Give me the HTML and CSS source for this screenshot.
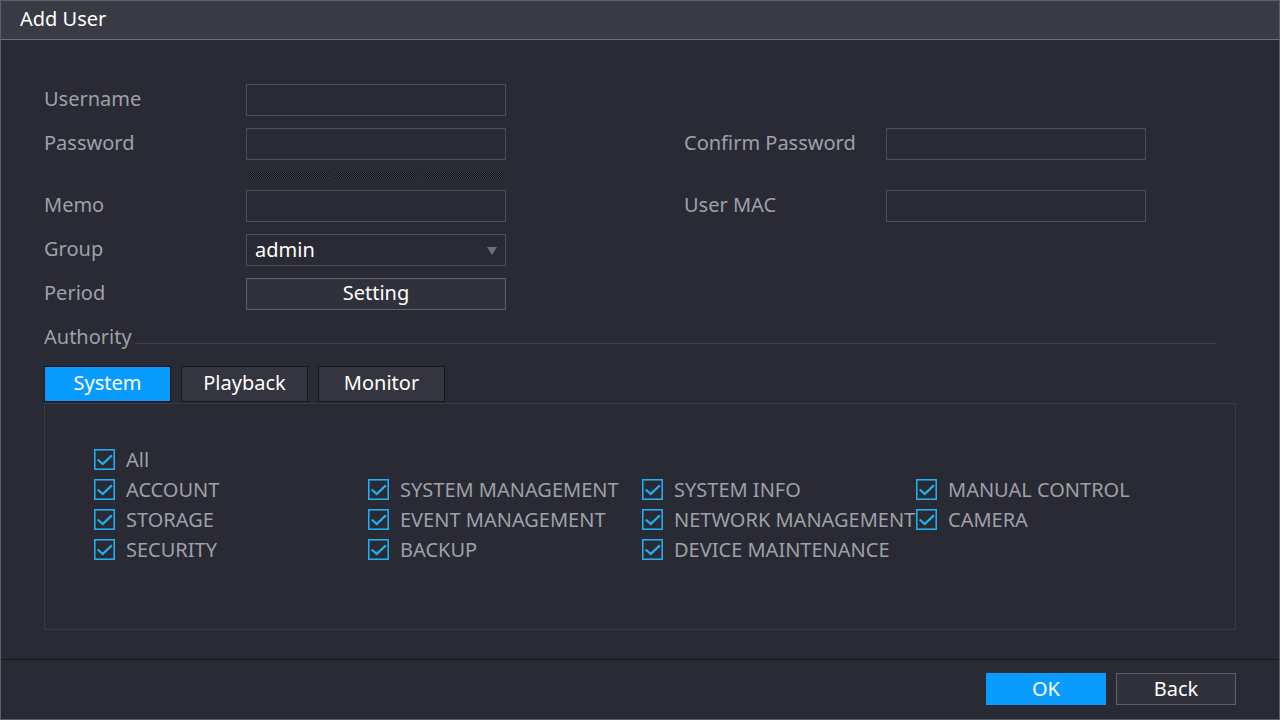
FILE: index.html
```html
<!DOCTYPE html>
<html>
<head>
<meta charset="utf-8">
<link rel="stylesheet" href="styles.css">
</head>
<body>
<div class="window">
  <div class="titlebar">Add User</div>
  <div class="content">
    <div class="form">
      <div class="label">Username</div>
      <div class="input"></div>
      <div class="spacer"></div>
      <div class="spacer"></div>
      <div class="spacer"></div>

      <div class="label">Password</div>
      <div class="input"></div>
      <div class="spacer"></div>
      <div class="label">Confirm Password</div>
      <div class="input"></div>

      <div class="spacer"></div>
      <div class="strength"><span></span><span></span><span></span></div>
      <div class="spacer"></div>
      <div class="spacer"></div>
      <div class="spacer"></div>

      <div class="label">Memo</div>
      <div class="input"></div>
      <div class="spacer"></div>
      <div class="label">User MAC</div>
      <div class="input"></div>

      <div class="label">Group</div>
      <div class="input select"><span class="value">admin</span><span class="arrow"></span></div>
      <div class="spacer"></div>
      <div class="spacer"></div>
      <div class="spacer"></div>

      <div class="label">Period</div>
      <div class="button-field">Setting</div>
      <div class="spacer"></div>
      <div class="spacer"></div>
      <div class="spacer"></div>
    </div>

    <div class="authority">
      <span class="auth-label">Authority</span>
      <span class="auth-line"></span>
    </div>

    <div class="tabs">
      <div class="tab active">System</div>
      <div class="tab">Playback</div>
      <div class="tab">Monitor</div>
    </div>

    <div class="panel">
      <div class="checks">
        <div class="check"><svg class="box" viewBox="0 0 20 20"><rect x="0.75" y="0.75" width="18.5" height="18.5"/><path d="M3.5 10 L8.3 14.3 L17 6"/></svg>All</div>
        <div class="empty"></div><div class="empty"></div><div class="empty"></div>

        <div class="check"><svg class="box" viewBox="0 0 20 20"><rect x="0.75" y="0.75" width="18.5" height="18.5"/><path d="M3.5 10 L8.3 14.3 L17 6"/></svg>ACCOUNT</div>
        <div class="check"><svg class="box" viewBox="0 0 20 20"><rect x="0.75" y="0.75" width="18.5" height="18.5"/><path d="M3.5 10 L8.3 14.3 L17 6"/></svg>SYSTEM MANAGEMENT</div>
        <div class="check"><svg class="box" viewBox="0 0 20 20"><rect x="0.75" y="0.75" width="18.5" height="18.5"/><path d="M3.5 10 L8.3 14.3 L17 6"/></svg>SYSTEM INFO</div>
        <div class="check"><svg class="box" viewBox="0 0 20 20"><rect x="0.75" y="0.75" width="18.5" height="18.5"/><path d="M3.5 10 L8.3 14.3 L17 6"/></svg>MANUAL CONTROL</div>

        <div class="check"><svg class="box" viewBox="0 0 20 20"><rect x="0.75" y="0.75" width="18.5" height="18.5"/><path d="M3.5 10 L8.3 14.3 L17 6"/></svg>STORAGE</div>
        <div class="check"><svg class="box" viewBox="0 0 20 20"><rect x="0.75" y="0.75" width="18.5" height="18.5"/><path d="M3.5 10 L8.3 14.3 L17 6"/></svg>EVENT MANAGEMENT</div>
        <div class="check"><svg class="box" viewBox="0 0 20 20"><rect x="0.75" y="0.75" width="18.5" height="18.5"/><path d="M3.5 10 L8.3 14.3 L17 6"/></svg>NETWORK MANAGEMENT</div>
        <div class="check"><svg class="box" viewBox="0 0 20 20"><rect x="0.75" y="0.75" width="18.5" height="18.5"/><path d="M3.5 10 L8.3 14.3 L17 6"/></svg>CAMERA</div>

        <div class="check"><svg class="box" viewBox="0 0 20 20"><rect x="0.75" y="0.75" width="18.5" height="18.5"/><path d="M3.5 10 L8.3 14.3 L17 6"/></svg>SECURITY</div>
        <div class="check"><svg class="box" viewBox="0 0 20 20"><rect x="0.75" y="0.75" width="18.5" height="18.5"/><path d="M3.5 10 L8.3 14.3 L17 6"/></svg>BACKUP</div>
        <div class="check"><svg class="box" viewBox="0 0 20 20"><rect x="0.75" y="0.75" width="18.5" height="18.5"/><path d="M3.5 10 L8.3 14.3 L17 6"/></svg>DEVICE MAINTENANCE</div>
        <div class="empty"></div>
      </div>
    </div>
  </div>
  <div class="footer">
    <div class="btn primary">OK</div>
    <div class="btn">Back</div>
  </div>
</div>
</body>
</html>
```

FILE: styles.css
```css
* { box-sizing: border-box; }

html, body {
  margin: 0;
  padding: 0;
  background: #292a33;
}

body {
  font-family: "Noto Sans", "Open Sans", sans-serif;
  font-size: 20px;
  color: #9da1a9;
}

.window {
  width: 1280px;
  height: 720px;
  border: 1px solid #5c6069;
  display: flex;
  flex-direction: column;
  background: #292a33;
  overflow: hidden;
}

.titlebar {
  height: 39px;
  flex: 0 0 39px;
  background: #393a43;
  border-bottom: 1px solid #6b6f78;
  color: #ffffff;
  font-size: 20px;
  line-height: 36px;
  padding-left: 19px;
}

.content {
  flex: 1;
  padding: 44px 43px 0 43px;
  display: flex;
  flex-direction: column;
}

.form {
  display: grid;
  grid-template-columns: 202px 260px 178px 202px 260px;
  grid-auto-rows: auto;
  row-gap: 12px;
  align-items: center;
}

.label {
  line-height: 30px;
  padding-bottom: 2px;
  white-space: nowrap;
}

.input, .button-field {
  height: 32px;
  border: 1px solid #4c5058;
  background: #292a33;
}

.select {
  display: flex;
  align-items: center;
  justify-content: space-between;
  padding: 0 8px 0 8px;
}

.select .value {
  color: #ffffff;
  line-height: 28px;
}

.arrow {
  width: 0;
  height: 0;
  border-left: 5px solid transparent;
  border-right: 5px solid transparent;
  border-top: 8px solid #6b707a;
  margin-top: 2px;
}

.button-field {
  background: #30313a;
  border-color: #5c6069;
  color: #ffffff;
  text-align: center;
  line-height: 28px;
}

.strength {
  height: 6px;
  display: flex;
  gap: 4px;
  padding-left: 1px;
}

.strength span {
  flex: 1;
  background: repeating-conic-gradient(#121318 0 25%, #3c3e48 0 50%) 0 0 / 2px 2px;
}

.authority {
  display: flex;
  align-items: center;
  margin-top: 12px;
  margin-right: 20px;
  height: 30px;
}

.auth-label {
  line-height: 30px;
}

.auth-line {
  flex: 1;
  height: 1px;
  background: #3e4049;
  margin-top: 12px;
  margin-left: 3px;
}

.tabs {
  display: flex;
  gap: 10px;
  margin-top: 14px;
}

.tab {
  width: 127px;
  height: 36px;
  border: 1px solid #17181e;
  background: #34353e;
  color: #ffffff;
  text-align: center;
  line-height: 32px;
}

.tab.active {
  background: #0a9bff;
}

.panel {
  margin-top: 1px;
  height: 227px;
  border: 1px solid #3a3b44;
  padding: 45px 0 0 49px;
}

.checks {
  display: grid;
  grid-template-columns: repeat(4, 274px);
  grid-auto-rows: 30px;
}

.check {
  display: flex;
  align-items: center;
  white-space: nowrap;
  height: 21px;
  line-height: 20px;
}

.box {
  width: 21px;
  height: 21px;
  margin-right: 11px;
  flex: 0 0 21px;
}

.box rect {
  fill: none;
  stroke: #22aef0;
  stroke-width: 1.5;
}

.box path {
  fill: none;
  stroke: #22aef0;
  stroke-width: 2.2;
}

.footer {
  flex: 0 0 60px;
  border-top: 1px solid #14151b;
  display: flex;
  justify-content: flex-end;
  gap: 10px;
  padding: 13px 43px 0 0;
}

.btn {
  width: 120px;
  height: 32px;
  border: 1px solid #5c6069;
  background: #30313a;
  color: #ffffff;
  text-align: center;
  line-height: 29px;
}

.btn.primary {
  background: #0a9bff;
  border-color: #0a9bff;
}
```
